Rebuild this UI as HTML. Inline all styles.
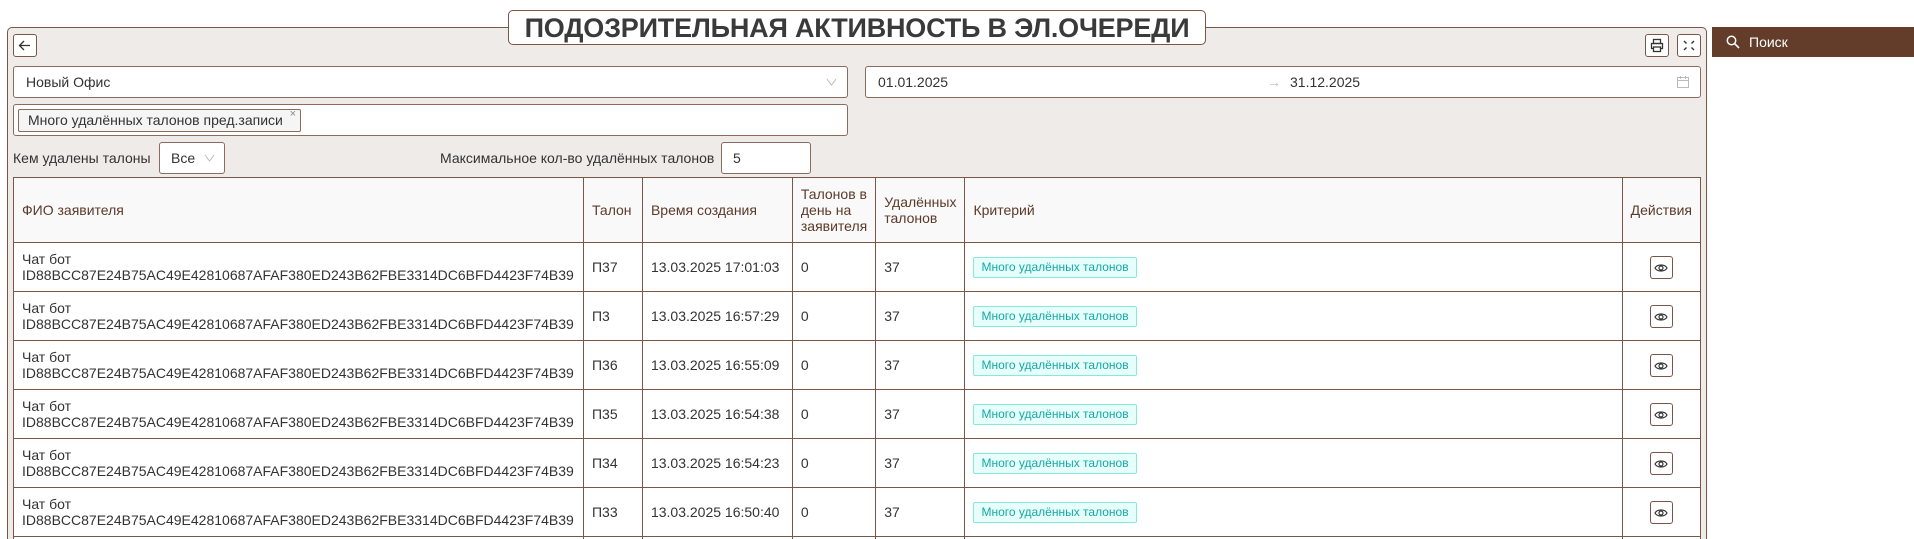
<!DOCTYPE html>
<html><head><meta charset="utf-8"><style>
*{box-sizing:border-box;margin:0;padding:0}
html,body{width:1914px;height:539px;overflow:hidden}
body{background:#fff;font-family:"Liberation Sans",sans-serif;font-size:14px;color:#333;position:relative}
.abs{position:absolute}
.panel{left:7px;top:27px;width:1700px;height:512px;background:#efebe8;border:1px solid #7a5646;border-bottom:none;border-radius:5px 5px 0 0}
.title{left:508px;top:10px;width:698px;height:35px;background:#fff;border:1px solid #7a5646;border-radius:5px;font-weight:bold;font-size:27px;color:#3a3a3a;text-align:center;line-height:34px;letter-spacing:-0.2px;white-space:nowrap;overflow:hidden}
.btn{background:#fff;border:1px solid #7a5646;border-radius:3px}
.inp{background:#fff;border:1px solid #8b6b5b;border-radius:3px}
.search{left:1712px;top:27px;width:202px;height:30px;background:#633c2a;color:#fff;font-size:14px;line-height:30px;padding-left:37px}
.tw{position:absolute;left:13px;top:177px;width:1688px;height:362px;overflow:hidden}
table{width:1688px;border-collapse:collapse;background:#fff}
td,th{border:1px solid #7a5646;text-align:left;vertical-align:middle;padding:0 8px}
th{background:#f9f9f9;font-weight:normal;color:#5c3a2a;height:65px;line-height:16px}
td{height:49px;line-height:16px}
.badge{display:inline-block;background:#e6fffb;border:1px solid #87e8de;color:#13a8a8;font-size:12px;line-height:19px;padding:0 7px;border-radius:2px}
.eye{display:inline-block;width:23px;height:23px;border:1px solid #7a5646;border-radius:3px;vertical-align:middle;text-align:center;padding-top:4px}
</style></head><body>
<div class="abs panel"></div>
<div class="abs title">ПОДОЗРИТЕЛЬНАЯ АКТИВНОСТЬ В ЭЛ.ОЧЕРЕДИ</div>
<div class="abs btn" style="left:13px;top:34px;width:24px;height:23px"><svg width="22" height="21" viewBox="0 0 22 21"><path d="M16 10.5H6M10 6l-4.5 4.5L10 15" fill="none" stroke="#333" stroke-width="1.3"/></svg></div>
<div class="abs btn" style="left:1645px;top:34px;width:24px;height:23px"><svg width="22" height="21" viewBox="0 0 22 21"><rect x="7.5" y="4.5" width="7" height="4" fill="none" stroke="#333" stroke-width="1.3"/><rect x="5.5" y="8.5" width="11" height="5" fill="none" stroke="#333" stroke-width="1.3"/><rect x="7.5" y="12" width="7" height="4.5" fill="#fff" stroke="#333" stroke-width="1.3"/></svg></div>
<div class="abs btn" style="left:1677px;top:34px;width:24px;height:23px"><svg width="22" height="21" viewBox="0 0 22 21"><path d="M6 6l2.5 2.5M16 6l-2.5 2.5M6 15l2.5-2.5M16 15l-2.5-2.5" stroke="#333" stroke-width="1.4"/></svg></div>
<div class="abs search"><svg class="abs" style="left:14px;top:8px" width="14" height="14" viewBox="0 0 14 14"><circle cx="5.5" cy="5.5" r="4.2" fill="none" stroke="#fff" stroke-width="1.5"/><path d="M8.6 8.6L13 13" stroke="#fff" stroke-width="1.6"/></svg>Поиск</div>
<div class="abs inp" style="left:13px;top:66px;width:835px;height:32px;padding-left:12px;line-height:30px">Новый Офис<svg class="abs" style="right:10px;top:11px" width="11" height="8" viewBox="0 0 11 8"><path d="M1 1l4.5 6L10 1" fill="none" stroke="#bbb"/></svg></div>
<div class="abs inp" style="left:865px;top:66px;width:836px;height:32px;line-height:30px"><span class="abs" style="left:12px">01.01.2025</span><span class="abs" style="left:401px;color:#bbb">→</span><span class="abs" style="left:424px">31.12.2025</span><svg class="abs" style="right:10px;top:8px" width="14" height="14" viewBox="0 0 14 14"><rect x="1.5" y="2.5" width="11" height="10" fill="none" stroke="#bbb"/><path d="M1.5 5.5h11M4.5 1v3M9.5 1v3" stroke="#bbb"/></svg></div>
<div class="abs inp" style="left:13px;top:104px;width:835px;height:32px"><div class="abs" style="left:4px;top:4px;width:283px;height:23px;background:#f5f5f5;border:1px solid #8b6b5b;border-radius:2px;padding-left:9px;line-height:21px;font-size:14px">Много удалённых талонов пред.записи<span class="abs" style="right:4px;top:-6px;font-size:11px;color:#888">×</span></div></div>
<div class="abs" style="left:13px;top:150px">Кем удалены талоны</div>
<div class="abs inp" style="left:159px;top:142px;width:66px;height:32px;padding-left:11px;line-height:30px">Все<svg class="abs" style="left:44px;top:11px" width="11" height="8" viewBox="0 0 11 8"><path d="M1 1l4.5 6L10 1" fill="none" stroke="#bbb"/></svg></div>
<div class="abs" style="left:440px;top:150px">Максимальное кол-во удалённых талонов</div>
<div class="abs inp" style="left:721px;top:142px;width:90px;height:32px;padding-left:11px;line-height:30px">5</div>
<div class="tw"><table>
<tr><th style="width:570px">ФИО заявителя</th><th style="width:59px">Талон</th><th style="width:150px">Время создания</th><th style="width:83px">Талонов в день на заявителя</th><th style="width:89px">Удалённых талонов</th><th style="width:658px">Критерий</th><th style="text-align:center">Действия</th></tr>
<tr><td>Чат бот<br>ID88BCC87E24B75AC49E42810687AFAF380ED243B62FBE3314DC6BFD4423F74B39</td><td>П37</td><td>13.03.2025 17:01:03</td><td>0</td><td>37</td><td><span class="badge">Много удалённых талонов</span></td><td style="text-align:center"><span class="eye"><svg width="14" height="12" viewBox="0 0 14 12"><path d="M1 6C3 2 11 2 13 6C11 10 3 10 1 6Z" fill="none" stroke="#333" stroke-width="1.2"/><circle cx="7" cy="6" r="2" fill="none" stroke="#333" stroke-width="1.2"/></svg></span></td></tr>
<tr><td>Чат бот<br>ID88BCC87E24B75AC49E42810687AFAF380ED243B62FBE3314DC6BFD4423F74B39</td><td>П3</td><td>13.03.2025 16:57:29</td><td>0</td><td>37</td><td><span class="badge">Много удалённых талонов</span></td><td style="text-align:center"><span class="eye"><svg width="14" height="12" viewBox="0 0 14 12"><path d="M1 6C3 2 11 2 13 6C11 10 3 10 1 6Z" fill="none" stroke="#333" stroke-width="1.2"/><circle cx="7" cy="6" r="2" fill="none" stroke="#333" stroke-width="1.2"/></svg></span></td></tr>
<tr><td>Чат бот<br>ID88BCC87E24B75AC49E42810687AFAF380ED243B62FBE3314DC6BFD4423F74B39</td><td>П36</td><td>13.03.2025 16:55:09</td><td>0</td><td>37</td><td><span class="badge">Много удалённых талонов</span></td><td style="text-align:center"><span class="eye"><svg width="14" height="12" viewBox="0 0 14 12"><path d="M1 6C3 2 11 2 13 6C11 10 3 10 1 6Z" fill="none" stroke="#333" stroke-width="1.2"/><circle cx="7" cy="6" r="2" fill="none" stroke="#333" stroke-width="1.2"/></svg></span></td></tr>
<tr><td>Чат бот<br>ID88BCC87E24B75AC49E42810687AFAF380ED243B62FBE3314DC6BFD4423F74B39</td><td>П35</td><td>13.03.2025 16:54:38</td><td>0</td><td>37</td><td><span class="badge">Много удалённых талонов</span></td><td style="text-align:center"><span class="eye"><svg width="14" height="12" viewBox="0 0 14 12"><path d="M1 6C3 2 11 2 13 6C11 10 3 10 1 6Z" fill="none" stroke="#333" stroke-width="1.2"/><circle cx="7" cy="6" r="2" fill="none" stroke="#333" stroke-width="1.2"/></svg></span></td></tr>
<tr><td>Чат бот<br>ID88BCC87E24B75AC49E42810687AFAF380ED243B62FBE3314DC6BFD4423F74B39</td><td>П34</td><td>13.03.2025 16:54:23</td><td>0</td><td>37</td><td><span class="badge">Много удалённых талонов</span></td><td style="text-align:center"><span class="eye"><svg width="14" height="12" viewBox="0 0 14 12"><path d="M1 6C3 2 11 2 13 6C11 10 3 10 1 6Z" fill="none" stroke="#333" stroke-width="1.2"/><circle cx="7" cy="6" r="2" fill="none" stroke="#333" stroke-width="1.2"/></svg></span></td></tr>
<tr><td>Чат бот<br>ID88BCC87E24B75AC49E42810687AFAF380ED243B62FBE3314DC6BFD4423F74B39</td><td>П33</td><td>13.03.2025 16:50:40</td><td>0</td><td>37</td><td><span class="badge">Много удалённых талонов</span></td><td style="text-align:center"><span class="eye"><svg width="14" height="12" viewBox="0 0 14 12"><path d="M1 6C3 2 11 2 13 6C11 10 3 10 1 6Z" fill="none" stroke="#333" stroke-width="1.2"/><circle cx="7" cy="6" r="2" fill="none" stroke="#333" stroke-width="1.2"/></svg></span></td></tr>
<tr><td style="height:10px"></td><td></td><td></td><td></td><td></td><td></td><td></td></tr>
</table></div>
</body></html>
